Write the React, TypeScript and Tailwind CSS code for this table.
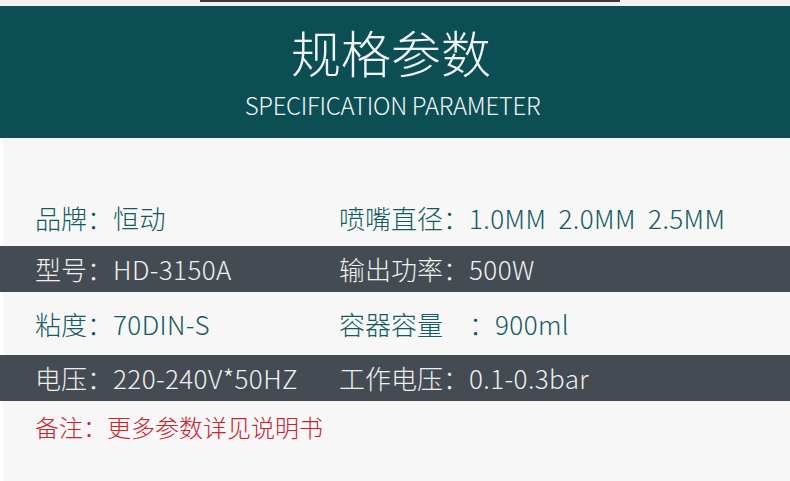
import React from "react";

const font = { fontFamily: '"Noto Sans CJK SC", "Noto Sans", sans-serif' };

function Cell({ label, value, dark }: { label: string; value: string; dark?: boolean }) {
  return (
    <div className={"whitespace-pre " + (dark ? "text-[#eef0f1]" : "text-[#145a61]")}>
      <span>{label}</span>
      <span className="tracking-[0.4px]">{value}</span>
    </div>
  );
}

export default function App() {
  return (
    <div className="w-[790px] h-[481px] bg-white overflow-hidden font-light" style={font}>
      <div className="h-[6px] bg-[#f1f1f1] flex">
        <div className="w-[200px]" />
        <div className="w-[420px] h-[2px] bg-[#3a3a3a]" />
      </div>
      <div className="h-[132px] bg-[#0b4f55] flex flex-col items-center text-[#f2f5f5]">
        <div className="mt-[15px] mr-[8px] text-[50px] leading-[60px] font-extralight">规格参数</div>
        <div className="mt-[9px] mr-[5px] text-[24px] leading-[30px] tracking-[-0.3px] font-extralight">SPECIFICATION PARAMETER</div>
      </div>
      <div className="ml-[3px] bg-[#f7f7f7] h-[108px] flex items-end pb-[13px] pl-[32px] text-[26px] leading-[30px]">
        <div className="w-[304px]"><Cell label="品牌：" value="恒动" /></div>
        <Cell label="喷嘴直径：" value="1.0MM  2.0MM  2.5MM" />
      </div>
      <div className="bg-[#454b52] h-[46px] flex items-center pl-[35px] text-[26px] leading-[30px]">
        <div className="w-[304px]"><Cell dark label="型号：" value="HD-3150A" /></div>
        <Cell dark label="输出功率：" value="500W" />
      </div>
      <div className="ml-[3px] bg-[#f7f7f7] h-[63px] flex items-center pl-[32px] text-[26px] leading-[30px]">
        <div className="w-[304px]"><Cell label="粘度：" value="70DIN-S" /></div>
        <Cell label="容器容量　：" value="900ml" />
      </div>
      <div className="bg-[#454b52] h-[46px] flex items-center pl-[35px] text-[26px] leading-[30px]">
        <div className="w-[304px]"><Cell dark label="电压：" value="220-240V*50HZ" /></div>
        <Cell dark label="工作电压：" value="0.1-0.3bar" />
      </div>
      <div className="ml-[3px] bg-[#f7f7f7] h-[80px] pt-[11px] pl-[32px] text-[24px] leading-[30px] text-[#c9232d]">
        备注：更多参数详见说明书
      </div>
    </div>
  );
}
